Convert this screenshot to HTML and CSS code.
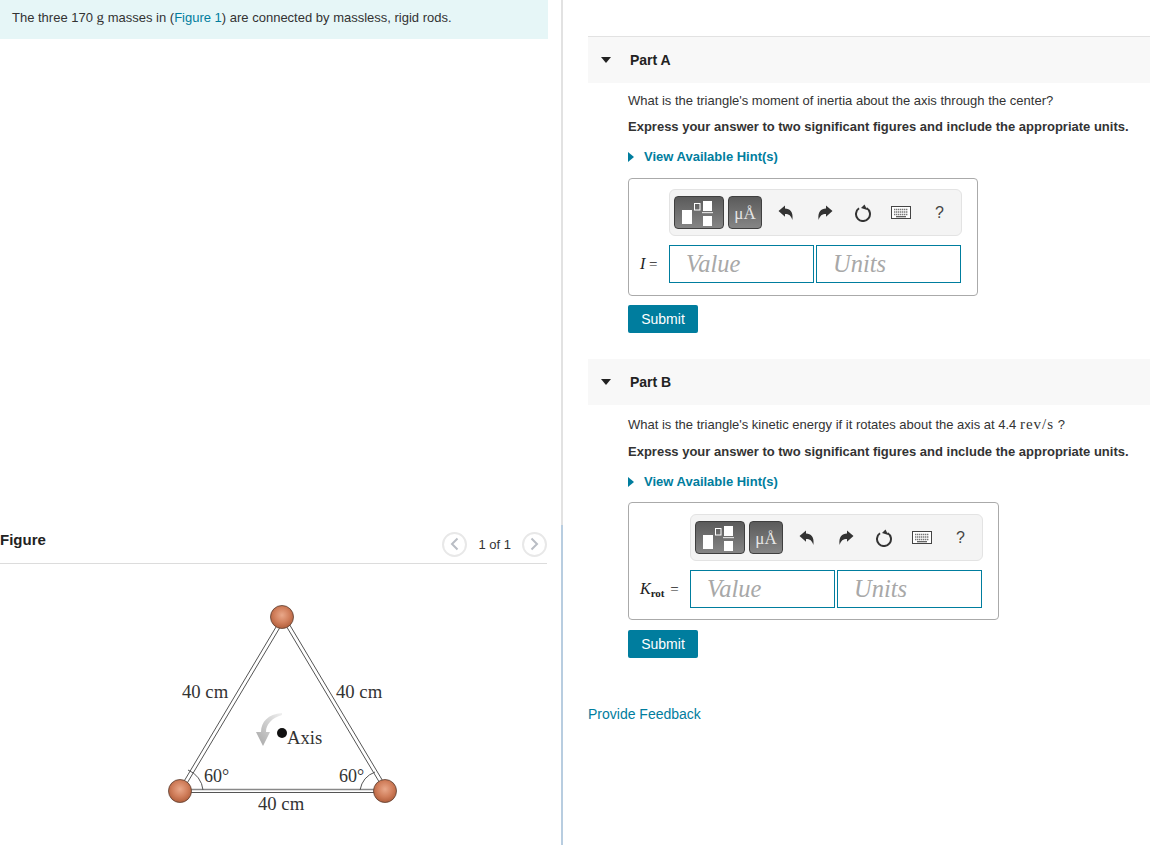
FILE: index.html
```html
<!DOCTYPE html>
<html lang="en">
  <head>
    <title>Rotating triangle problem</title>
    <link rel="stylesheet" href="styles.css">
  </head>
  <body>
    <svg class="icon-defs" width="0" height="0">
      <symbol id="icon-templates" viewBox="0 0 50 33">
        <rect x="8" y="13" width="10" height="14" fill="#fff"/>
        <rect x="20.5" y="6.5" width="5.5" height="6.5" fill="none" stroke="#fff"/>
        <rect x="29" y="4" width="9" height="10" fill="#fff"/>
        <rect x="28" y="15" width="11" height="1.2" fill="#ddd"/>
        <rect x="29" y="19" width="9" height="10" fill="#fff"/>
      </symbol>
      <symbol id="icon-undo" viewBox="0 0 16 16">
        <path d="M0.5 6 L7 0.5 V3.6 C12 3.8 15.5 7 14.4 15 C13 10.6 11 9 7 9 V11.8 Z" fill="#333"/>
      </symbol>
      <symbol id="icon-redo" viewBox="0 0 16 16">
        <path d="M15.5 6 L9 0.5 V3.6 C4 3.8 0.5 7 1.6 15 C3 10.6 5 9 9 9 V11.8 Z" fill="#333"/>
      </symbol>
      <symbol id="icon-reset" viewBox="0 0 18 18">
        <path d="M12.5 4 A7 7 0 1 1 5 4.3" fill="none" stroke="#333" stroke-width="2"/>
        <path d="M7 4 L10.5 0.5 L13.2 6 Z" fill="#333"/>
      </symbol>
      <symbol id="icon-keyboard" viewBox="0 0 20 13">
        <rect x="0.5" y="0.5" width="19" height="12" fill="#fff" stroke="#444"/>
        <path d="M3 3.5 H17 M3 6 H17 M3 8.5 H17" stroke="#777" stroke-width="1.4" stroke-dasharray="1.4 .6"/>
        <path d="M5 10.7 H15" stroke="#555" stroke-width="1.2"/>
      </symbol>
    </svg>

    <div class="page">
      <div class="left-col">
        <div class="intro">
          The three 170 <span class="math">g</span> masses in (<a href="#">Figure 1</a>) are connected by massless, rigid rods.
        </div>

        <div class="figure-head">
          <strong>Figure</strong>
          <div class="pager">
            <span class="pager-btn"><svg width="9" height="14"><path d="M7.5 1.5 L2 7 L7.5 12.5" fill="none" stroke="#b9bdc4" stroke-width="2"/></svg></span>
            <span>1 of 1</span>
            <span class="pager-btn"><svg width="9" height="14"><path d="M1.5 1.5 L7 7 L1.5 12.5" fill="none" stroke="#b9bdc4" stroke-width="2"/></svg></span>
          </div>
        </div>

        <svg class="diagram" width="250" height="225" viewBox="160 595 250 225">
          <defs>
            <radialGradient id="ball" cx="50%" cy="42%" r="55%">
              <stop offset="0" stop-color="#e9a88a"/>
              <stop offset="0.6" stop-color="#d17f5c"/>
              <stop offset="1" stop-color="#b5623f"/>
            </radialGradient>
            <linearGradient id="swoosh" x1="1" y1="0" x2="0" y2="1">
              <stop offset="0" stop-color="#f0f0f0"/>
              <stop offset="1" stop-color="#a5a5a5"/>
            </linearGradient>
          </defs>
          <!-- rods -->
          <g stroke="#555" fill="none" stroke-width="1">
            <path d="M183 783 L279 622 M186 785 L282 624"/>
            <path d="M285 624 L381 785 M288 622 L384 783"/>
            <path d="M190 789.5 H375" stroke="#888" stroke-width="1.6"/>
            <path d="M190 792.5 H375"/>
            <path d="M188 770 A24 24 0 0 1 203 790"/>
            <path d="M360 790 A24 24 0 0 1 375 772"/>
          </g>
          <path d="M282 713 C268 714 261 722 261 732 H256 L263 746 L270 732 H266 C266 724 272 718 282 715 Z" fill="url(#swoosh)"/>
          <circle cx="282" cy="733" r="5" fill="#111"/>
          <g fill="url(#ball)" stroke="#5c4033" stroke-width="0.8">
            <circle cx="282" cy="617" r="11.5"/>
            <circle cx="180" cy="791" r="11.5"/>
            <circle cx="385" cy="791" r="11.5"/>
          </g>
          <g class="diagram-text">
            <text x="182" y="698">40 cm</text>
            <text x="336" y="698">40 cm</text>
            <text x="287" y="744">Axis</text>
            <text class="angle" x="204" y="782">60°</text>
            <text class="angle" x="339" y="782">60°</text>
            <text x="258" y="810">40 cm</text>
          </g>
        </svg>
      </div>

      <div class="divider"></div>

      <div class="right-col">
        <div class="part part-a">
          <div class="part-head"><span class="caret"></span><strong>Part A</strong></div>
          <div class="part-body">
            <p class="question">What is the triangle's moment of inertia about the axis through the center?</p>
            <p class="instruction">Express your answer to two significant figures and include the appropriate units.</p>
            <a class="hints" href="#"><span class="hint-arrow"></span>View Available Hint(s)</a>
            <div class="answer-box">
              <div class="toolbar">
                <button class="tool-btn tool-wide"><svg width="50" height="33"><use href="#icon-templates"/></svg></button>
                <button class="tool-btn tool-unit">μÅ</button>
                <svg class="tool undo" width="16" height="16"><use href="#icon-undo"/></svg>
                <svg class="tool redo" width="16" height="16"><use href="#icon-redo"/></svg>
                <svg class="tool reset" width="18" height="18"><use href="#icon-reset"/></svg>
                <svg class="tool keyboard" width="20" height="13"><use href="#icon-keyboard"/></svg>
                <span class="tool-help">?</span>
              </div>
              <div class="answer-row">
                <span class="answer-label"><i>I</i> =</span>
                <input class="field" placeholder="Value">
                <input class="field" placeholder="Units">
              </div>
            </div>
            <button class="submit">Submit</button>
          </div>
        </div>

        <div class="part part-b">
          <div class="part-head"><span class="caret"></span><strong>Part B</strong></div>
          <div class="part-body">
            <p class="question">What is the triangle's kinetic energy if it rotates about the axis at 4.4 <span class="math rate">rev/s</span> ?</p>
            <p class="instruction">Express your answer to two significant figures and include the appropriate units.</p>
            <a class="hints" href="#"><span class="hint-arrow"></span>View Available Hint(s)</a>
            <div class="answer-box">
              <div class="toolbar">
                <button class="tool-btn tool-wide"><svg width="50" height="33"><use href="#icon-templates"/></svg></button>
                <button class="tool-btn tool-unit">μÅ</button>
                <svg class="tool undo" width="16" height="16"><use href="#icon-undo"/></svg>
                <svg class="tool redo" width="16" height="16"><use href="#icon-redo"/></svg>
                <svg class="tool reset" width="18" height="18"><use href="#icon-reset"/></svg>
                <svg class="tool keyboard" width="20" height="13"><use href="#icon-keyboard"/></svg>
                <span class="tool-help">?</span>
              </div>
              <div class="answer-row">
                <span class="answer-label"><i>K</i><span class="sub">rot</span> =</span>
                <input class="field" placeholder="Value">
                <input class="field" placeholder="Units">
              </div>
            </div>
            <button class="submit">Submit</button>
          </div>
        </div>

        <a class="feedback" href="#">Provide Feedback</a>
      </div>
    </div>
  </body>
</html>
```

FILE: styles.css
```css
html, body {
  margin: 0;
  height: 100%;
  overflow: hidden;
  background: #fff;
}
body {
  font-family: "Liberation Sans", Arial, sans-serif;
  font-size: 13px;
  color: #333;
}
a {
  color: #007d9e;
  text-decoration: none;
}
.icon-defs {
  display: block;
  height: 0;
}
.page {
  display: flex;
  height: 845px;
}
.math {
  font-family: "Liberation Serif", serif;
  font-size: 15px;
  line-height: 0;
}
.rate {
  letter-spacing: 1px;
}

/* left column */
.left-col {
  width: 561px;
  flex-shrink: 0;
}
.intro {
  width: 536px;
  height: 39px;
  padding-left: 12px;
  line-height: 35px;
  background: #e6f6f7;
}
.figure-head {
  width: 547px;
  height: 38px;
  margin-top: 486px;
  display: flex;
  align-items: center;
  justify-content: space-between;
  border-bottom: 1px solid #dcdcdc;
}
.figure-head strong {
  margin-bottom: 9px;
  font-size: 15px;
  color: #222;
}
.pager {
  display: flex;
  align-items: center;
  gap: 11px;
}
.pager-btn {
  width: 21px;
  height: 21px;
  border: 2px solid #e8e8e8;
  border-radius: 50%;
  display: flex;
  align-items: center;
  justify-content: center;
}
.diagram {
  display: block;
  margin-top: 31px;
  margin-left: 160px;
}
.diagram-text {
  font-family: "Liberation Serif", serif;
  font-size: 18.7px;
  fill: #333;
}
.diagram-text .angle {
  font-size: 18px;
}

/* divider between the columns */
.divider {
  width: 2px;
  flex-shrink: 0;
  background: linear-gradient(#e2e2e2 525px, #b8cde0 525px);
}

/* right column */
.right-col {
  flex-grow: 1;
  padding: 36px 0 0 25px;
}
.part-head {
  height: 46px;
  display: flex;
  align-items: center;
  background: #f8f8f8;
  font-size: 14px;
  color: #222;
}
.part-a .part-head {
  border-top: 1px solid #e2e2e2;
}
.caret {
  width: 0;
  height: 0;
  margin: 0 19px 0 13px;
  border-left: 5.5px solid transparent;
  border-right: 5.5px solid transparent;
  border-top: 6px solid #222;
}
.part-body {
  padding-left: 40px;
}
.question,
.instruction {
  margin: 8px 0 0;
  line-height: 18px;
}
.question {
  margin-top: 9px;
}
.part-b .question {
  margin-top: 11px;
}
.part-b .instruction {
  margin-top: 9px;
}
.instruction {
  font-weight: bold;
}
.hints {
  display: flex;
  align-items: center;
  margin-top: 12px;
  line-height: 18px;
  font-weight: bold;
}
.hint-arrow {
  width: 0;
  height: 0;
  margin-right: 10px;
  border-top: 5px solid transparent;
  border-bottom: 5px solid transparent;
  border-left: 6px solid #007d9e;
}
.answer-box {
  width: fit-content;
  margin-top: 12px;
  padding: 10px 16px 12px 11px;
  display: flex;
  flex-direction: column;
  gap: 9px;
  border: 1px solid #aaa;
  border-radius: 4px;
}
.part-b .answer-box {
  margin-top: 11px;
  padding-top: 11px;
  padding-bottom: 11px;
}
.toolbar {
  width: 291px;
  height: 45px;
  align-self: flex-end;
  margin-right: -1px;
  display: flex;
  align-items: center;
  border: 1px solid #e3e3e3;
  border-radius: 6px;
  background: #f4f4f4;
}
.tool-btn {
  height: 33px;
  padding: 0;
  border: 1px solid #3f3f3f;
  border-radius: 4px;
  background: linear-gradient(#5b5b5b, #858585);
  color: #e6e6e6;
}
.tool-wide {
  width: 50px;
  margin-left: 4px;
  margin-right: 4px;
}
.tool-wide svg {
  display: block;
  margin-left: -1px;
}
.tool-unit {
  width: 34px;
  padding-top: 3px;
  font-family: "Liberation Serif", serif;
  font-size: 17px;
}
.tool {
  flex-shrink: 0;
}
.undo {
  margin-left: 16px;
}
.redo {
  margin-left: 23px;
}
.reset {
  margin-left: 21px;
}
.keyboard {
  margin-left: 19px;
}
.tool-help {
  margin-left: 24px;
  font-size: 16px;
  color: #444;
}
.answer-row {
  display: flex;
  align-items: center;
}
.answer-label {
  margin-right: 9px;
  font-family: "Liberation Serif", serif;
  font-size: 15px;
  white-space: nowrap;
  color: #222;
}
.part-a .answer-label {
  width: 20px;
}
.part-b .answer-label {
  width: 41px;
}
.answer-label i {
  font-size: 16px;
}
.sub {
  font-size: 11px;
  font-weight: bold;
  position: relative;
  top: 3px;
  margin-right: 2px;
}
.field {
  width: 145px;
  height: 38px;
  box-sizing: border-box;
  margin: 0 2px 0 0;
  padding: 0 0 0 16px;
  border: 1px solid #007d9e;
  outline: none;
  font-family: "Liberation Serif", serif;
  font-style: italic;
  font-size: 24.5px;
}
.field:last-child {
  margin-right: 0;
}
.field::placeholder {
  color: #a8a8a8;
  opacity: 1;
}
.submit {
  display: block;
  width: 70px;
  height: 28px;
  margin-top: 9px;
  padding: 0;
  border: none;
  border-radius: 2px;
  background: #007d9e;
  color: #fff;
  font-family: "Liberation Sans", Arial, sans-serif;
  font-size: 14px;
}
.part-b {
  margin-top: 26px;
}
.part-b .submit {
  margin-top: 10px;
}
.feedback {
  display: block;
  margin-top: 47px;
  line-height: 18px;
  font-size: 14px;
}
```
